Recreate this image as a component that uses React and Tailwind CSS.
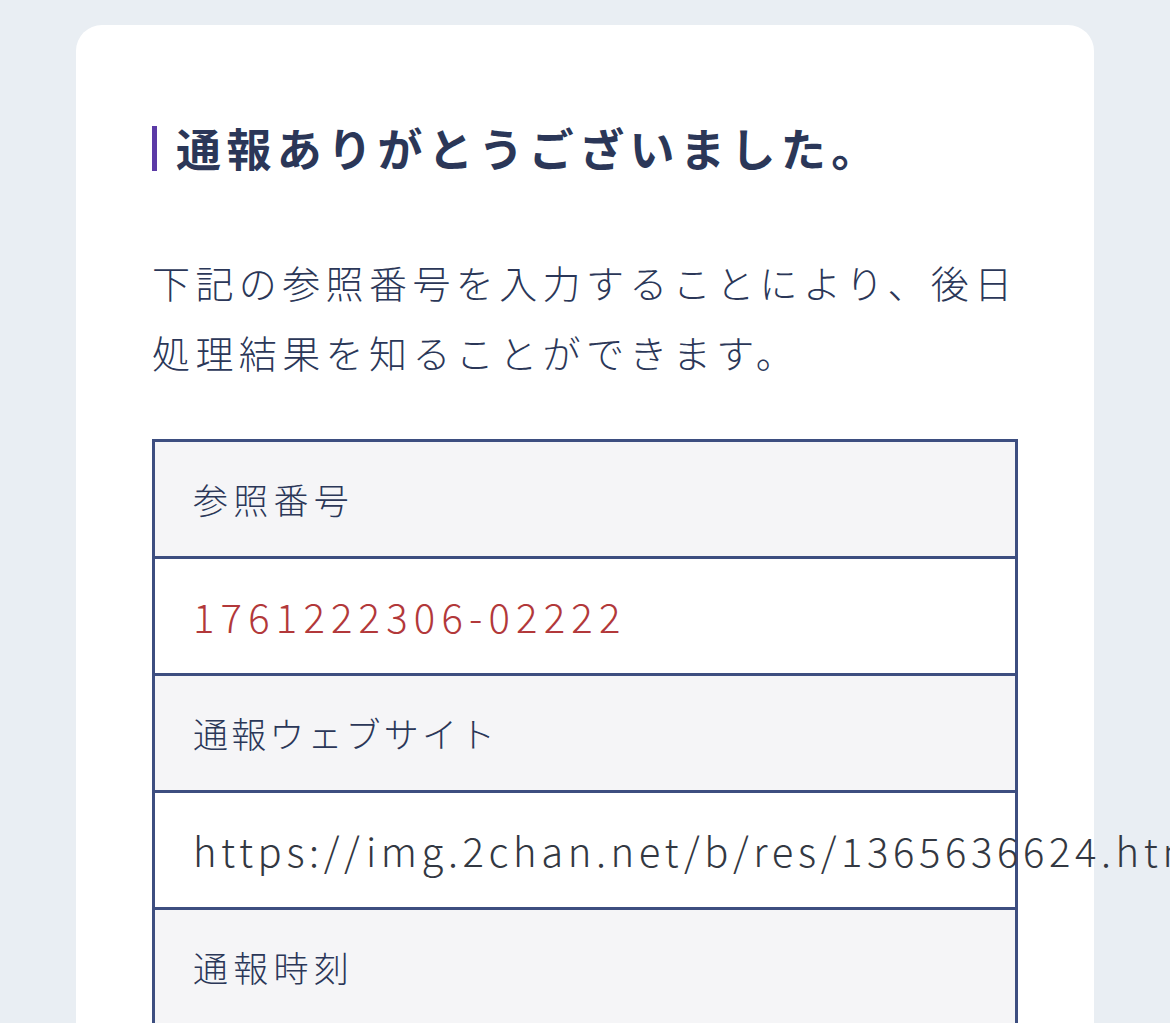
import React from 'react'

const FONT = "font-['Noto_Sans_CJK_JP',sans-serif]"

const ROWS = [
  { label: '参照番号', value: '1761222306-02222', red: true },
  { label: '通報ウェブサイト', value: 'https://img.2chan.net/b/res/1365636624.htm' },
  { label: '通報時刻', value: '' },
]

export default function App() {
  return (
    <div className={`min-h-screen bg-[#e9eef3] px-[76px] pt-[25px] ${FONT} text-[#2b3758]`}>
      <div className="bg-white rounded-t-[26px] px-[76px] pt-[100px] pb-20">
        <h1 className="flex items-center gap-[19px] text-[45px] font-bold leading-[46px] tracking-[0.12em]">
          <span className="w-[5px] h-[45px] bg-[#5b3aa6] shrink-0" />
          通報ありがとうございました。
        </h1>

        <p className="mt-[76px] text-[38px] leading-[70px] tracking-[0.142em] font-light">
          下記の参照番号を入力することにより、後日処理結果を知ることができます。
        </p>

        {/* rows carry their own top border; the frame draws the other three sides */}
        <div className="mt-[52px] border-x-[3px] border-b-[3px] border-[#3d4e80]">
          {ROWS.map((r) => (
            <React.Fragment key={r.label}>
              <div className={`h-[117px] flex items-center px-[38px] bg-[#f5f5f7] border-t-[3px] border-[#3d4e80] text-[35px] font-light ${r.label.length > 4 ? 'tracking-[0.09em]' : 'tracking-[0.15em]'}`}>
                {r.label}
              </div>
              {r.value && (
                <div className={`h-[117px] flex items-center px-[38px] bg-white border-t-[3px] border-[#3d4e80] text-[40px] whitespace-nowrap font-light ${r.red ? 'text-[#b2383a] tracking-[0.155em]' : 'text-[#333842] tracking-[0.115em]'}`}>
                  {r.value}
                </div>
              )}
            </React.Fragment>
          ))}
        </div>
      </div>
    </div>
  )
}
